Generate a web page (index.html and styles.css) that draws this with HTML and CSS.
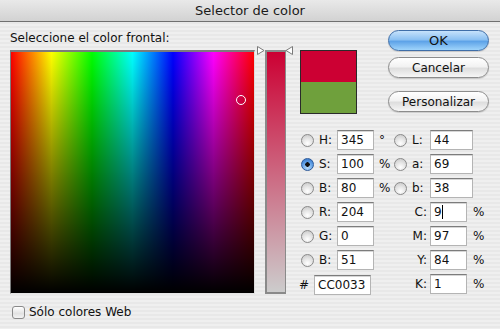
FILE: index.html
```html
<html lang="es">
<head>
    <meta charset="UTF-8">
    <meta name="viewport" content="width=device-width, initial-scale=1.0">
    <title>Selector de color</title>
    <link rel="stylesheet" href="styles.css">
</head>
<body>
    <div class="window">
        <div class="titlebar">Selector de color</div>
        <div class="content">
            <div class="picker">
                <div class="prompt">Seleccione el color frontal:</div>
                <div class="picker-row">
                    <div class="field"><span class="marker"></span></div>
                    <div class="slider-wrap">
                        <svg class="arrow arrow-in" width="8" height="9" viewBox="0 0 8 9"><polygon points="0.5,0.5 7,4.5 0.5,8.5" fill="#fff" stroke="#7a7a7a"/></svg>
                        <div class="slider"></div>
                        <svg class="arrow arrow-out" width="8" height="9" viewBox="0 0 8 9"><polygon points="7.5,0.5 1,4.5 7.5,8.5" fill="#fff" stroke="#7a7a7a"/></svg>
                    </div>
                </div>
                <div class="web-only"><span class="checkbox"></span>Sólo colores Web</div>
            </div>
            <div class="side">
                <div class="side-top">
                    <div class="swatch">
                        <div class="swatch-new"></div>
                        <div class="swatch-current"></div>
                    </div>
                    <div class="buttons">
                        <button type="button" class="btn btn-default">OK</button>
                        <button type="button" class="btn">Cancelar</button>
                        <button type="button" class="btn btn-custom">Personalizar</button>
                    </div>
                </div>
                <div class="values">
                    <div class="col col-left">
                        <div class="row"><span class="radio"></span><span class="lbl">H:</span><span class="box">345</span><span class="unit">°</span></div>
                        <div class="row"><span class="radio checked"></span><span class="lbl">S:</span><span class="box">100</span><span class="unit">%</span></div>
                        <div class="row"><span class="radio"></span><span class="lbl">B:</span><span class="box">80</span><span class="unit">%</span></div>
                        <div class="row group"><span class="radio"></span><span class="lbl">R:</span><span class="box">204</span></div>
                        <div class="row"><span class="radio"></span><span class="lbl">G:</span><span class="box">0</span></div>
                        <div class="row"><span class="radio"></span><span class="lbl">B:</span><span class="box">51</span></div>
                        <div class="row hex"><span class="hash">#</span><span class="box box-hex">CC0033</span></div>
                    </div>
                    <div class="col col-right">
                        <div class="row"><span class="radio"></span><span class="lbl">L:</span><span class="box box-wide">44</span></div>
                        <div class="row"><span class="radio"></span><span class="lbl">a:</span><span class="box box-wide">69</span></div>
                        <div class="row"><span class="radio"></span><span class="lbl">b:</span><span class="box box-wide">38</span></div>
                        <div class="row group"><span class="lbl-cmyk">C:</span><span class="box">9<i class="caret"></i></span><span class="unit">%</span></div>
                        <div class="row"><span class="lbl-cmyk">M:</span><span class="box">97</span><span class="unit">%</span></div>
                        <div class="row"><span class="lbl-cmyk">Y:</span><span class="box">84</span><span class="unit">%</span></div>
                        <div class="row"><span class="lbl-cmyk">K:</span><span class="box">1</span><span class="unit">%</span></div>
                    </div>
                </div>
            </div>
        </div>
    </div>
</body>
</html>
```

FILE: styles.css
```css
body
{
    margin: 0;
    font-family: "DejaVu Sans", sans-serif;
    font-size: 12px;
    color: #111;
}
.window
{
    width: 500px;
    height: 329px;
    overflow: hidden;
    background: repeating-linear-gradient(#efefef 0, #efefef 2px, #e8e8e8 2px, #e8e8e8 4px);
}
.titlebar
{
    height: 21px;
    line-height: 22px;
    text-align: center;
    font-size: 13px;
    color: #1a1a1a;
    background: linear-gradient(#e9e9e9, #d2d2d2);
    border-bottom: 1px solid #707070;
}
.content
{
    display: flex;
    padding-left: 10px;
}
.picker
{
    width: 284px;
}
.prompt
{
    padding-top: 8px;
    line-height: 16px;
    height: 16px;
    margin-bottom: 4px;
}
.picker-row
{
    display: flex;
    align-items: flex-start;
}
.field
{
    position: relative;
    box-sizing: border-box;
    width: 245px;
    height: 244px;
    border-top: 2px solid #7c7c7c;
    border-left: 1px solid #7c7c7c;
    border-right: 1px solid #dcdcdc;
    border-bottom: 1px solid #e4e4e4;
    background:
        linear-gradient(to bottom, rgba(0, 0, 0, 0), #000),
        linear-gradient(to right, #f00, #ff0, #0f0, #0ff, #00f, #f0f, #f00);
}
.marker
{
    position: absolute;
    left: 225px;
    top: 43px;
    width: 8px;
    height: 8px;
    border: 1.5px solid #fff;
    border-radius: 50%;
}
.slider-wrap
{
    position: relative;
    margin-left: 2px;
    padding: 0 7px 0 8px;
}
.slider
{
    box-sizing: border-box;
    width: 21px;
    height: 244px;
    border: 2px solid #8a8a8a;
    border-right-width: 1px;
    background: linear-gradient(#cc0033, #cccccc);
}
.arrow
{
    position: absolute;
    top: -4px;
}
.arrow-in
{
    left: 0;
}
.arrow-out
{
    right: 0;
}
.web-only
{
    display: flex;
    align-items: center;
    margin-top: 11px;
    margin-left: 2px;
    font-size: 12px;
}
.checkbox
{
    box-sizing: border-box;
    width: 13px;
    height: 13px;
    margin-right: 4px;
    border: 1px solid #8a8a8a;
    border-radius: 3px;
    background: linear-gradient(#ffffff, #e2e2e2 60%, #f4f4f4);
}
.side
{
    margin-left: 6px;
}
.side-top
{
    display: flex;
    align-items: flex-start;
}
.swatch
{
    box-sizing: border-box;
    width: 57px;
    height: 64px;
    margin-top: 28px;
    border: 1px solid #2a2a2a;
}
.swatch-new
{
    height: 31px;
    background: #cc0033;
}
.swatch-current
{
    height: 31px;
    background: #6fa03c;
}
.buttons
{
    display: flex;
    flex-direction: column;
    margin-left: 31px;
    margin-top: 8px;
}
.btn
{
    width: 101px;
    height: 21px;
    padding: 0;
    font-family: "DejaVu Sans", sans-serif;
    font-size: 12px;
    color: #111;
    border: 1px solid #8c8c8c;
    border-radius: 11px;
    background: linear-gradient(#ffffff, #f2f2f2 45%, #dedede 55%, #f6f6f6);
    box-shadow: 0 1px 1px rgba(0, 0, 0, 0.15);
}
.btn + .btn
{
    margin-top: 6px;
}
.btn-default
{
    font-size: 13px;
    border-color: #3f6ea8;
    background: linear-gradient(#c6e2fb, #8cc1f2 45%, #5ea3e8 55%, #9fd4fb);
}
.btn.btn-custom
{
    margin-top: 13px;
}
.values
{
    display: flex;
    margin-top: 16px;
    margin-left: 1px;
}
.col
{
    width: 93px;
}
.row
{
    display: flex;
    align-items: center;
    height: 20px;
    margin-bottom: 4px;
    font-size: 12px;
}
.row.group
{
    margin-top: 4px;
}
.row.hex
{
    margin-top: 5px;
}
.radio
{
    box-sizing: border-box;
    width: 13px;
    height: 13px;
    border: 1px solid #8a8a8a;
    border-radius: 50%;
    background: radial-gradient(circle at 50% 75%, #ffffff, #e6e6e6 45%, #c4c4c4);
}
.radio.checked
{
    border-color: #2c5a9a;
    background: radial-gradient(circle, #111 0, #111 2px, transparent 2.5px), radial-gradient(circle at 50% 80%, #b8dcfb, #5d9ee6 55%, #2f6fc4);
}
.lbl
{
    width: 18px;
    padding-left: 5px;
}
.lbl-cmyk
{
    width: 33px;
    padding-right: 3px;
    text-align: right;
}
.box
{
    box-sizing: border-box;
    display: flex;
    align-items: center;
    width: 37px;
    height: 20px;
    padding-left: 3px;
    font-size: 12px;
    background: #fff;
    border: 1px solid #b4b4b4;
    border-top-color: #7c7c7c;
    box-shadow: inset 0 1px 0 #d6d6d6;
}
.box-wide
{
    width: 43px;
}
.box-hex
{
    width: 57px;
}
.caret
{
    display: inline-block;
    width: 1px;
    height: 14px;
    background: #000;
}
.unit
{
    padding-left: 5px;
    align-self: flex-start;
    line-height: 20px;
}
.col-right .unit
{
    padding-left: 6px;
}
.hash
{
    width: 15px;
    margin-left: -2px;
}
```
